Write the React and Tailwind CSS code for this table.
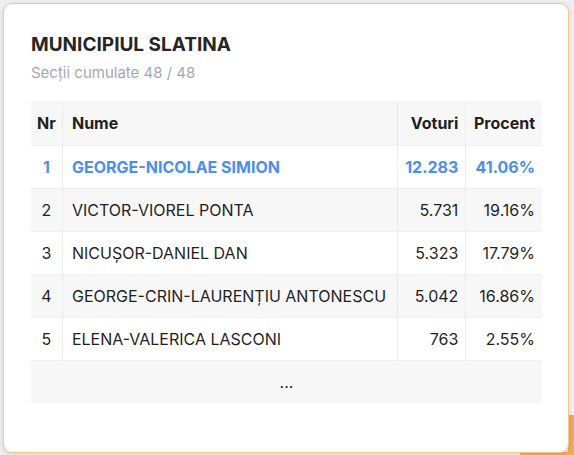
import React from "react";

const rows = [
  { nr: 1, name: "GEORGE-NICOLAE SIMION", votes: "12.283", pct: "41.06%", hl: true },
  { nr: 2, name: "VICTOR-VIOREL PONTA", votes: "5.731", pct: "19.16%" },
  { nr: 3, name: "NICUȘOR-DANIEL DAN", votes: "5.323", pct: "17.79%" },
  { nr: 4, name: "GEORGE-CRIN-LAURENȚIU ANTONESCU", votes: "5.042", pct: "16.86%" },
  { nr: 5, name: "ELENA-VALERICA LASCONI", votes: "763", pct: "2.55%" },
];

export default function App() {
  return (
    <div
      className="w-[574px] h-[455px] bg-[#eeeeee] overflow-hidden relative"
      style={{ fontFamily: "Inter, 'Noto Sans', sans-serif" }}
    >
      <div className="absolute right-0 top-[415px] w-[6px] h-[40px] bg-[#f0a85a]" />
      <div className="absolute left-[520px] bottom-0 w-[60px] h-[3px] bg-[#f0a85a]" />
      <div className="absolute left-[3px] top-[3px] w-[566px] h-[450px] bg-white border border-[#f9c58e] rounded-[9px] shadow-[0_1px_4px_rgba(0,0,0,0.12)] px-[27px] pt-[27px]">
        <div className="text-[19px] leading-[28px] font-bold text-[#262626]">
          MUNICIPIUL SLATINA
        </div>
        <div className="text-[15px] leading-[20px] text-[#a3a7b0] mt-[4px]">
          Secții cumulate 48 / 48
        </div>
        <table className="mt-[18px] w-[511px] border-collapse text-[16px] text-[#1f1f1f]">
          <thead>
            <tr className="bg-[#f7f7f7] h-[44px]">
              <th className="px-[6px] text-center font-bold border-r border-[#ececec]">Nr</th>
              <th className="pl-[9px] pr-[8px] text-left font-bold border-r border-[#ececec]">Nume</th>
              <th className="px-[7px] text-right font-bold border-r border-[#ececec]">Voturi</th>
              <th className="px-[7px] text-right font-bold">Procent</th>
            </tr>
          </thead>
          <tbody>
            {rows.map((r, i) => (
              <tr
                key={r.nr}
                className={`h-[43px] border-t border-[#f0f0f0] ${i % 2 === 1 ? "bg-[#f7f7f7]" : "bg-white"} ${r.hl ? "text-[#4b8df5] font-bold" : ""}`}
              >
                <td className="px-[6px] text-center border-r border-[#ececec]">{r.nr}</td>
                <td className="pl-[9px] pr-[8px] text-left border-r border-[#ececec] whitespace-nowrap">{r.name}</td>
                <td className="px-[7px] text-right border-r border-[#ececec]">{r.votes}</td>
                <td className="px-[7px] text-right">{r.pct}</td>
              </tr>
            ))}
            <tr className="h-[43px] bg-[#f7f7f7] border-t border-[#f0f0f0]">
              <td colSpan={4} className="text-center">...</td>
            </tr>
          </tbody>
        </table>
      </div>
    </div>
  );
}
